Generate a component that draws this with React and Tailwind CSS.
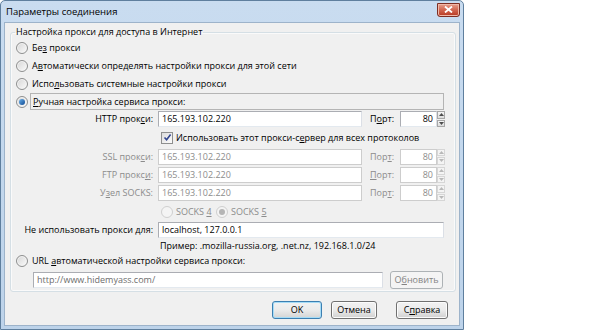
// Диалог «Параметры соединения» (Windows 7, Firefox)

const U = ({ children }) => <span className="underline underline-offset-[1px]">{children}</span>;

function Radio({ checked, disabled }) {
  return (
    <span
      className={`flex h-[12px] w-[12px] shrink-0 items-center justify-center rounded-full border ${
        disabled
          ? 'border-[#cfcfcf] bg-[#f4f4f4]'
          : 'border-[#8e8f8f] bg-gradient-to-br from-[#d6d6d6] to-[#fbfbfb] shadow-[inset_0_0_0_1px_#f4f4f4]'
      }`}
    >
      {checked && (
        <span
          className={`h-[6px] w-[6px] rounded-full ${
            disabled ? 'bg-[#b5b5b5]' : 'bg-gradient-to-br from-[#6cb2ea] to-[#0e4a93]'
          }`}
        />
      )}
    </span>
  );
}

function Checkbox() {
  return (
    <span className="flex h-[12px] w-[12px] shrink-0 items-center justify-center border border-[#8e8f8f] bg-gradient-to-br from-[#dcdcdc] to-[#fcfcfc]">
      <svg width="9" height="9" viewBox="0 0 9 9">
        <path d="M1.5 4.5 L3.6 6.8 L7.6 1.6" fill="none" stroke="#31458f" strokeWidth="1.6" />
      </svg>
    </span>
  );
}

function Field({ value, disabled, className = '', right }) {
  return (
    <div
      className={`flex h-[16px] items-center border bg-white px-[3px] ${right ? 'justify-end' : ''} ${
        disabled ? 'border-[#cdcdcd] text-[#8c8c8c]' : 'border-[#abadb3] border-b-[#e3e9ef] border-r-[#dbdfe6] text-black'
      } ${className}`}
    >
      {value}
    </div>
  );
}

function Arrow({ up, disabled }) {
  return (
    <svg width="5" height="3" viewBox="0 0 5 3">
      <path d={up ? 'M0 3 L2.5 0 L5 3Z' : 'M0 0 L2.5 3 L5 0Z'} fill={disabled ? '#b8b8b8' : '#4d4d4d'} />
    </svg>
  );
}

function Spin({ disabled }) {
  return (
    <div className="flex h-[16px] w-[8px] flex-col gap-[1px]">
      <div className={`flex flex-1 items-center justify-center border ${disabled ? 'border-[#d6d6d6] bg-[#f4f4f4]' : 'border-[#a7a7a7] bg-gradient-to-b from-[#f6f6f6] to-[#dcdcdc]'}`}>
        <Arrow up disabled={disabled} />
      </div>
      <div className={`flex flex-1 items-center justify-center border ${disabled ? 'border-[#d6d6d6] bg-[#f4f4f4]' : 'border-[#a7a7a7] bg-gradient-to-b from-[#f6f6f6] to-[#dcdcdc]'}`}>
        <Arrow disabled={disabled} />
      </div>
    </div>
  );
}

function Btn({ children, def, disabled, className = '' }) {
  return (
    <div
      className={`flex h-[18px] items-center justify-center rounded-[3px] border ${
        disabled
          ? 'border-[#adb2b5] bg-[#f4f4f4] text-[#838383]'
          : def
          ? 'border-[#3c7fb1] bg-gradient-to-b from-[#f2f2f2] via-[#ebebeb] to-[#d4d4d4] shadow-[inset_0_0_0_1px_#a6dcf7] text-black'
          : 'border-[#707070] bg-gradient-to-b from-[#f2f2f2] via-[#ebebeb] to-[#d0d0d0] shadow-[inset_0_0_0_1px_#fcfcfc] text-black'
      } ${className}`}
    >
      {children}
    </div>
  );
}

function ProxyRow({ label, value, port, disabled, h = 'h-[18px]' }) {
  return (
    <div className={`flex ${h} items-center`}>
      <div className={`w-[137px] text-right ${disabled ? 'text-[#8c8c8c]' : 'text-black'}`}>{label}</div>
      <Field value={value} disabled={disabled} className="ml-[5px] w-[204px]" />
      <div className={`ml-[8px] w-[30px] ${disabled ? 'text-[#8c8c8c]' : 'text-black'}`}>{port}</div>
      <Field value="80" right disabled={disabled} className="w-[37px]" />
      <Spin disabled={disabled} />
    </div>
  );
}

export default function App() {
  return (
    <div className="h-[336px] w-[600px] bg-white text-[9px] leading-[12px] text-black" style={{ fontFamily: '"Open Sans", "Liberation Sans", sans-serif' }}>
      <div className="flex h-[330px] w-[464px] flex-col rounded-t-[5px] border border-[#5f7f9e] bg-gradient-to-b from-[#c9dcf0] to-[#bdd3ea]">
        {/* Заголовок */}
        <div className="flex h-[21px] items-center justify-between pl-[5px] pr-[3px]">
          <span className="text-[9.5px]">Параметры соединения</span>
          <div className="mt-[-4px] flex h-[14px] w-[23px] items-center justify-center rounded-b-[3px] border border-[#7d2e23] bg-gradient-to-b from-[#e7a08d] via-[#d1654f] to-[#b7361e] shadow-[inset_0_0_0_1px_#f0b8a8]">
            <svg width="9" height="7" viewBox="0 0 9 7">
              <path d="M1 0.5 L8 6.5 M8 0.5 L1 6.5" stroke="#ffffff" strokeWidth="1.8" />
            </svg>
          </div>
        </div>

        {/* Клиентская область */}
        <div className="mx-[3px] mb-[3px] flex flex-1 flex-col border border-[#9db3ca] bg-[#f0f0f0]">
          <fieldset className="ml-[5px] mt-[2px] w-[446px] rounded-[3px] border border-[#d5dfe5] px-[5px] pb-[2px] shadow-[inset_0_0_0_1px_#fafafa]">
            <legend className="-ml-[1px] px-[1px] leading-[14px]">Настройка прокси для доступа в Интернет</legend>

            <div className="flex h-[18px] items-center gap-[4px]">
              <Radio />
              <span>Бе<U>з</U> прокси</span>
            </div>
            <div className="flex h-[18px] items-center gap-[4px]">
              <Radio />
              <span>А<U>в</U>томатически определять настройки прокси для этой сети</span>
            </div>
            <div className="flex h-[18px] items-center gap-[4px]">
              <Radio />
              <span>Испо<U>л</U>ьзовать системные настройки прокси</span>
            </div>
            <div className="flex h-[17px] items-center">
              <Radio checked />
              <div className="ml-[2px] mr-[6px] flex h-[17px] flex-1 items-center border border-[#b4b4b4] pl-[2px]">
                <span><U>Р</U>учная настройка сервиса прокси:</span>
              </div>
            </div>

            <ProxyRow label={<>HTTP прок<U>с</U>и:</>} value="165.193.102.220" port={<>П<U>о</U>рт:</>} />

            <div className="flex h-[19px] items-center gap-[3px] pl-[145px]">
              <Checkbox />
              <span>Использовать этот прокси-с<U>е</U>рвер для всех протоколов</span>
            </div>

            <ProxyRow disabled h="h-[19px]" label={<>SSL прок<U>с</U>и:</>} value="165.193.102.220" port={<>Пор<U>т</U>:</>} />
            <ProxyRow disabled label={<>FTP прокс<U>и</U>:</>} value="165.193.102.220" port={<><U>П</U>орт:</>} />
            <ProxyRow disabled label={<>У<U>з</U>ел SOCKS:</>} value="165.193.102.220" port={<>Пор<U>т</U>:</>} />

            <div className="flex h-[19px] items-center pl-[145px] text-[#8c8c8c]">
              <Radio disabled />
              <span className="ml-[3px] w-[40px]">SOCKS <U>4</U></span>
              <Radio checked disabled />
              <span className="ml-[3px]">SOCKS <U>5</U></span>
            </div>

            <div className="flex h-[18px] items-center">
              <div className="w-[137px] text-right">Не использовать прокси <U>д</U>ля:</div>
              <Field value="localhost, 127.0.0.1" className="ml-[5px] w-[286px]" />
            </div>
            <div className="flex h-[13px] items-center pl-[144px]">
              Пример: .mozilla-russia.org, .net.nz, 192.168.1.0/24
            </div>

            <div className="flex h-[18px] items-center gap-[4px]">
              <Radio />
              <span>URL <U>а</U>втоматической настройки сервиса прокси:</span>
            </div>
            <div className="flex h-[19px] items-center">
              <Field value="http://www.hidemyass.com/" className="ml-[17px] w-[350px] !text-[#6d6d6d]" />
              <Btn disabled className="ml-[7px] w-[53px] h-[17px]">
                <span>О<U>б</U>новить</span>
              </Btn>
            </div>
          </fieldset>

          <div className="mt-[9px] flex justify-end pr-[11px]">
            <Btn def className="w-[50px]">OK</Btn>
            <Btn className="ml-[9px] w-[46px]">Отмена</Btn>
            <Btn className="ml-[19px] w-[52px]">
              <span>С<U>п</U>равка</span>
            </Btn>
          </div>
        </div>
      </div>
    </div>
  );
}
